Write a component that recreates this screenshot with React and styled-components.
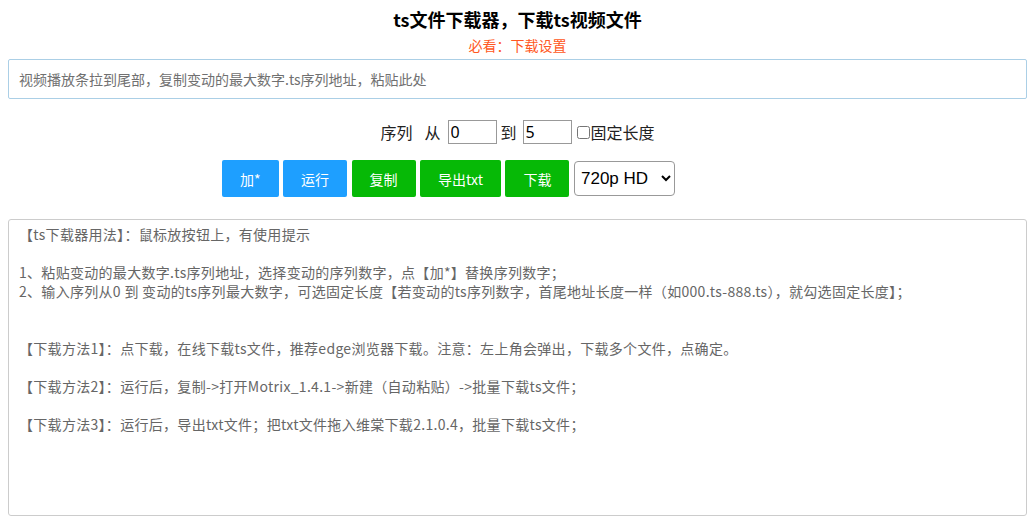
import React from "react";
import styled, { createGlobalStyle } from "styled-components";

const GlobalStyle = createGlobalStyle`
	body {
		margin: 8px;
		background: #fff;
		font-family: "Noto Sans", "Noto Sans CJK SC", sans-serif;
		color: #333;
	}
	* {
		box-sizing: border-box;
	}
`;

const Page = styled.div`
	display: flex;
	flex-direction: column;
`;

const Title = styled.h1`
	margin: 0;
	font-size: 18px;
	line-height: 22px;
	font-weight: 700;
	color: #000;
	text-align: center;
	font-family: "Noto Sans CJK SC", sans-serif;
`;

const Notice = styled.a`
	margin-top: 4px;
	align-self: center;
	font-size: 14px;
	line-height: 22px;
	color: #ff5722;
	text-decoration: none;
	font-family: "Noto Sans CJK SC", sans-serif;
`;

const UrlInput = styled.input`
	margin-top: 3px;
	width: 100%;
	height: 40px;
	padding: 0 10px;
	border: 1px solid #abcfe6;
	border-radius: 2px;
	font-size: 14px;
	font-family: "Noto Sans CJK SC", sans-serif;
	color: #333;
	outline: none;

	&::placeholder {
		color: #707070;
	}
`;

const RangeRow = styled.div`
	margin-top: 18px;
	height: 30px;
	display: flex;
	align-items: center;
	justify-content: center;
	font-size: 16px;
	color: #222;
	font-family: "Noto Sans CJK SC", sans-serif;
`;

const Word = styled.span`
	margin-left: ${({ $ml }) => $ml || 0}px;
	margin-right: ${({ $mr }) => $mr || 0}px;
`;

const NumInput = styled.input`
	width: 49px;
	height: 24px;
	padding: 0 2px;
	border: 1px solid #999;
	font-size: 16px;
	font-family: "Noto Sans", sans-serif;
	color: #000;
	outline: none;
`;

const Check = styled.input`
	margin: 0 1px 0 5px;
	width: 13px;
	height: 13px;
`;

const ButtonRow = styled.div`
	margin-top: 13px;
	display: flex;
	justify-content: center;
	align-items: center;
	gap: 4.5px;
	padding-right: 138px;
`;

const Button = styled.button`
	height: 37px;
	padding: 0 18px;
	border: none;
	border-radius: 2px;
	background: ${({ $tone }) => ($tone === "blue" ? "#1e9fff" : "#06b906")};
	color: #fff;
	font-size: 14px;
	font-family: "Noto Sans CJK SC", sans-serif;
	cursor: pointer;
	white-space: nowrap;
`;

const Quality = styled.select`
	width: 101px;
	height: 35px;
	padding: 0 0 0 2px;
	border: 1px solid #999;
	border-radius: 4px;
	background: #fff;
	font-size: 17px;
	font-family: "Liberation Sans", sans-serif;
	color: #000;
`;

const Guide = styled.textarea`
	margin-top: 22px;
	width: 100%;
	height: 297px;
	padding: 5px 10px;
	border: 1px solid #ccc;
	border-radius: 3px;
	resize: none;
	font-size: 14px;
	line-height: 19px;
	letter-spacing: 0.3px;
	color: #666;
	font-family: "Noto Sans CJK SC", sans-serif;
	outline: none;
`;

const guideText = [
	"【ts下载器用法】：鼠标放按钮上，有使用提示",
	"",
	"1、粘贴变动的最大数字.ts序列地址，选择变动的序列数字，点【加*】替换序列数字；",
	"2、输入序列从0 到 变动的ts序列最大数字，可选固定长度【若变动的ts序列数字，首尾地址长度一样（如000.ts-888.ts），就勾选固定长度】；",
	"",
	"",
	"【下载方法1】：点下载，在线下载ts文件，推荐edge浏览器下载。注意：左上角会弹出，下载多个文件，点确定。",
	"",
	"【下载方法2】：运行后，复制->打开Motrix_1.4.1->新建（自动粘贴）->批量下载ts文件；",
	"",
	"【下载方法3】：运行后，导出txt文件；把txt文件拖入维棠下载2.1.0.4，批量下载ts文件；",
].join("\n");

const buttons = [
	{ label: "加*", tone: "blue" },
	{ label: "运行", tone: "blue" },
	{ label: "复制", tone: "green" },
	{ label: "导出txt", tone: "green" },
	{ label: "下载", tone: "green" },
];

const App = () => {
	return (
		<Page>
			<GlobalStyle />
			<Title>ts文件下载器，下载ts视频文件</Title>
			<Notice href="#">必看：下载设置</Notice>
			<UrlInput placeholder="视频播放条拉到尾部，复制变动的最大数字.ts序列地址，粘贴此处" />
			<RangeRow>
				<Word $mr={12}>序列</Word>
				<Word $mr={7}>从</Word>
				<NumInput defaultValue="0" />
				<Word $ml={4} $mr={6}>到</Word>
				<NumInput defaultValue="5" />
				<Check type="checkbox" />
				<Word>固定长度</Word>
			</RangeRow>
			<ButtonRow>
				{buttons.map((b) => (
					<Button key={b.label} $tone={b.tone}>
						{b.label}
					</Button>
				))}
				<Quality defaultValue="720">
					<option value="1080">1080p HD</option>
					<option value="720">720p HD</option>
					<option value="480">480p</option>
				</Quality>
			</ButtonRow>
			<Guide readOnly value={guideText} />
		</Page>
	);
};

export default App;
